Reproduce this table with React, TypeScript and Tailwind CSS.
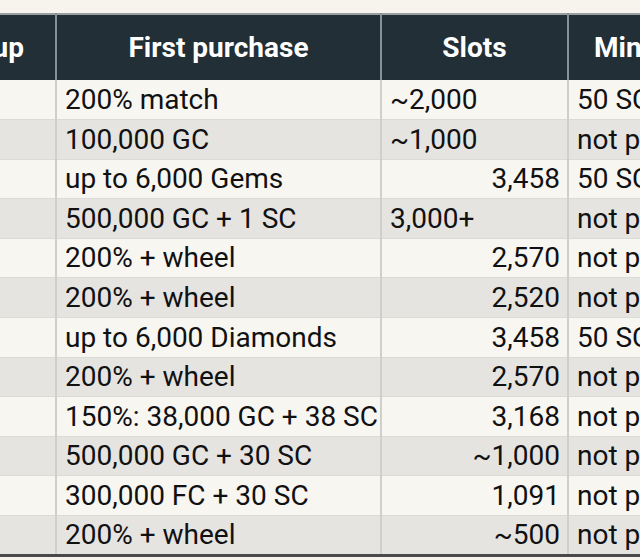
import React from "react";

type Row = { first: string; slots: string; slotsLeft?: boolean; min: string };

const rows: Row[] = [
  { first: "200% match", slots: "~2,000", slotsLeft: true, min: "50 SC" },
  { first: "100,000 GC", slots: "~1,000", slotsLeft: true, min: "not published" },
  { first: "up to 6,000 Gems", slots: "3,458", min: "50 SC" },
  { first: "500,000 GC + 1 SC", slots: "3,000+", slotsLeft: true, min: "not published" },
  { first: "200% + wheel", slots: "2,570", min: "not published" },
  { first: "200% + wheel", slots: "2,520", min: "not published" },
  { first: "up to 6,000 Diamonds", slots: "3,458", min: "50 SC" },
  { first: "200% + wheel", slots: "2,570", min: "not published" },
  { first: "150%: 38,000 GC + 38 SC", slots: "3,168", min: "not published" },
  { first: "500,000 GC + 30 SC", slots: "~1,000", min: "not published" },
  { first: "300,000 FC + 30 SC", slots: "1,091", min: "not published" },
  { first: "200% + wheel", slots: "~500", min: "not published" },
];

export default function App() {
  return (
    <div
      className="w-[640px] h-[560px] overflow-hidden bg-[#f7f4ee] pt-[13px]"
      style={{ fontFamily: "Roboto, 'Liberation Sans', sans-serif" }}
    >
      <table className="ml-[-106px] border-collapse table-fixed w-[924px] text-[28px] text-[#111] border-b-[3px] border-b-[#4a4a4a]">
        <colgroup>
          <col className="w-[162px]" />
          <col className="w-[325px]" />
          <col className="w-[187px]" />
          <col className="w-[250px]" />
        </colgroup>
        <thead>
          <tr className="h-[66px] bg-[#222f37] text-white">
            <th className="border-t-2 border-t-[#9a9fa2] border-r-2 border-r-[#8a9196] font-bold text-center leading-none">
              Sign-up
            </th>
            <th className="border-t-2 border-t-[#9a9fa2] border-r-2 border-r-[#8a9196] font-bold text-center leading-none">
              First purchase
            </th>
            <th className="border-t-2 border-t-[#9a9fa2] border-r-2 border-r-[#8a9196] font-bold text-center leading-none">
              Slots
            </th>
            <th className="border-t-2 border-t-[#9a9fa2] font-bold text-center leading-none whitespace-nowrap">
              Min redemption
            </th>
          </tr>
        </thead>
        <tbody>
          {rows.map((r, i) => (
            <tr
              key={i}
              className={
                "h-[39.6px] " + (i % 2 === 0 ? "bg-[#f8f6f1]" : "bg-[#e5e4e1]")
              }
            >
              <td className="border-r-2 border-r-[#cfcfcd] border-b border-b-[#dadad7] pl-[8px] pr-[7px] py-0 leading-[1.2]"></td>
              <td className="border-r-2 border-r-[#cfcfcd] border-b border-b-[#dadad7] pl-[8px] pr-[7px] py-0 leading-[1.2] whitespace-nowrap">
                {r.first}
              </td>
              <td
                className={
                  "border-r-2 border-r-[#cfcfcd] border-b border-b-[#dadad7] pl-[8px] pr-[7px] py-0 leading-[1.2] whitespace-nowrap " +
                  (r.slotsLeft ? "text-left" : "text-right")
                }
              >
                {r.slots}
              </td>
              <td className="border-b border-b-[#dadad7] pl-[8px] pr-[7px] py-0 leading-[1.2] whitespace-nowrap">
                {r.min}
              </td>
            </tr>
          ))}
        </tbody>
      </table>
    </div>
  );
}
